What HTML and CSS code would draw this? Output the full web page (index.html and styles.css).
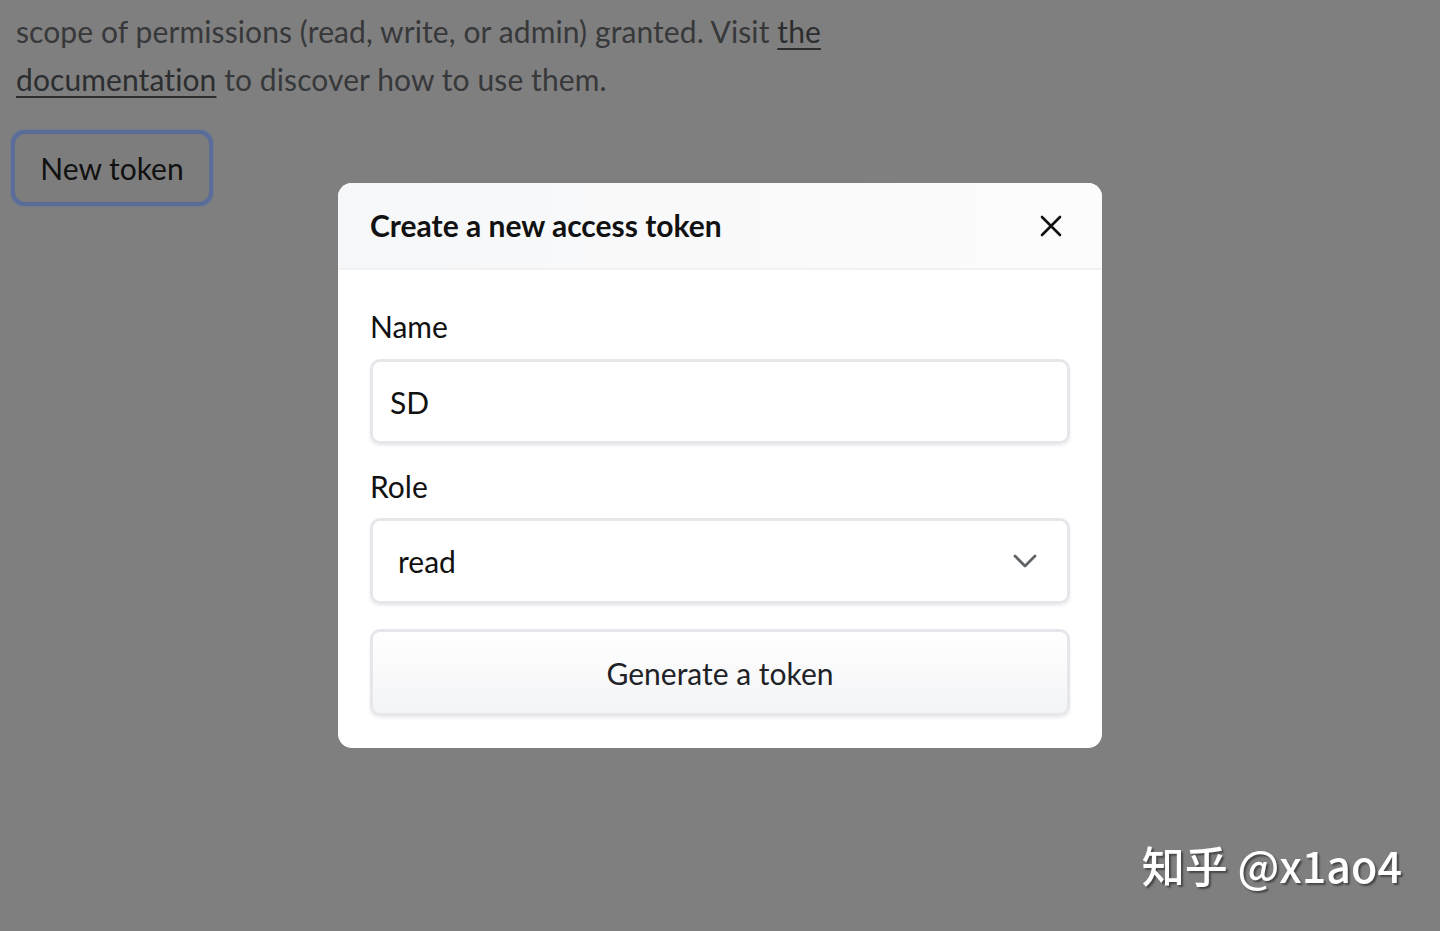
FILE: index.html
```html
<!DOCTYPE html>
<html lang="en">
<head>
  <meta charset="UTF-8" />
  <title>Access Tokens</title>
  <link rel="stylesheet" href="styles.css">
</head>
<body>

<div class="page">
  <p class="intro">
    scope of permissions (read, write, or admin) granted. Visit <a href="#">the<br>documentation</a> to discover how to use them.
  </p>
  <button class="btn-new">New token</button>
</div>

<div class="overlay">
  <div class="modal">
    <div class="modal-head">
      <h2>Create a new access token</h2>
      <button class="close" aria-label="Close">
        <svg width="22" height="22" viewBox="0 0 22 22"><path d="M2 2L20 20M20 2L2 20" stroke="#111" stroke-width="2.6" fill="none" stroke-linecap="round"/></svg>
      </button>
    </div>
    <form class="modal-body">
      <label class="field-label">Name</label>
      <div class="field">SD</div>
      <label class="field-label">Role</label>
      <div class="field select">
        <span>read</span>
        <svg width="24" height="14" viewBox="0 0 24 14"><path d="M2 2L12 12L22 2" stroke="#5f6368" stroke-width="2.8" fill="none" stroke-linecap="round" stroke-linejoin="round"/></svg>
      </div>
      <button type="button" class="btn-generate">Generate a token</button>
    </form>
  </div>
</div>

<div class="watermark">知乎 @x1ao4</div>

</body>
</html>
```

FILE: styles.css
```css
* {
  box-sizing: border-box;
  font-family: Lato, "Noto Sans", sans-serif;
}
body {
  margin: 0;
  background: #7f7f7f;
  color: #3b3b3b;
  height: 931px;
  overflow: hidden;
}
.page {
  padding: 7px 16px;
}
.intro {
  margin: 0;
  font-size: 30px;
  line-height: 48px;
  letter-spacing: 0.1px;
  color: #37383a;
}
.intro a {
  color: #2c2d2f;
  text-decoration: underline;
  text-decoration-thickness: 2px;
  text-underline-offset: 5px;
}
.btn-new {
  margin-top: 27px;
  margin-left: -5px;
  width: 202px;
  height: 76px;
  background: #7d7d7d;
  border: 4px solid #5a6d98;
  border-radius: 14px;
  font-size: 30px;
  color: #111;
  box-shadow: 0 0 0 1px #6f7a90;
}
.overlay {
  position: fixed;
  inset: 0;
  display: flex;
  justify-content: center;
  align-items: flex-start;
  padding-top: 183px;
}
.modal {
  width: 764px;
  background: #fff;
  border-radius: 14px;
  overflow: hidden;
}
.modal-head {
  height: 87px;
  padding: 0 32px;
  display: flex;
  align-items: center;
  justify-content: space-between;
  background: linear-gradient(to right, #f6f7f8, #fcfcfd);
  border-bottom: 2px solid #f1f2f4;
}
.modal-head h2 {
  margin: 0 0 2px;
  font-size: 30px;
  font-weight: 700;
  color: #111;
}
.close {
  background: none;
  border: none;
  padding: 0;
  margin-right: 8px;
  display: flex;
}
.modal-body {
  padding: 36px 32px 32px;
  display: flex;
  flex-direction: column;
}
.field-label {
  font-size: 30px;
  line-height: 40px;
  color: #111;
  margin-bottom: 13px;
}
.field {
  height: 85px;
  border: 3px solid #e5e7eb;
  border-radius: 10px;
  box-shadow: 0 2px 3px rgba(0,0,0,0.08);
  padding: 0 17px;
  display: flex;
  align-items: center;
  font-size: 30px;
  color: #111;
  margin-bottom: 22px;
}
.select {
  height: 86px;
  justify-content: space-between;
  padding: 0 30px 0 25px;
  margin-bottom: 25px;
}
.field-label + .select {
  margin-top: -1px;
}
.btn-generate {
  height: 87px;
  border: 3px solid #e6e7ea;
  border-radius: 10px;
  background: linear-gradient(to bottom, #ffffff, #f3f4f6);
  box-shadow: 0 2px 3px rgba(0,0,0,0.08);
  font-size: 30px;
  color: #1f2328;
}
.watermark {
  position: fixed;
  right: 38px;
  bottom: 36px;
  font-family: "Noto Sans CJK SC", sans-serif;
  font-size: 43px;
  font-weight: 500;
  color: #fff;
  text-shadow: 2px 2px 2px rgba(0,0,0,0.45);
}
```
